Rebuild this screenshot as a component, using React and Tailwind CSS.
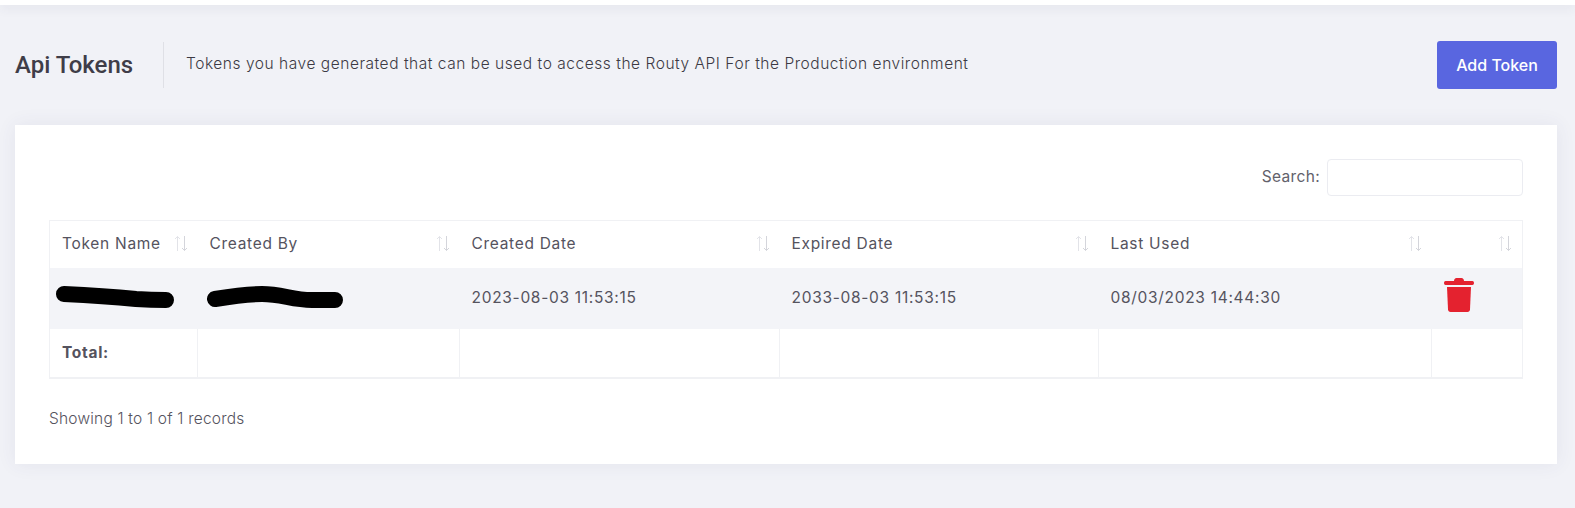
const SANS = "font-['Inter','Open_Sans',sans-serif]"

function SortIcon() {
  return (
    <svg width="16" height="17" viewBox="0 0 16 17" fill="none" stroke="#e2e3e8" strokeWidth="1" className="shrink-0">
      <path d="M4.500 16V1.500M2 4l2.500-2.500L7 4" />
      <path d="M11.500 1v14.500M9 13l2.500 2.500L14 13" stroke="#d4d5db" />
    </svg>
  )
}

function TrashIcon() {
  return (
    <svg width="30" height="34" viewBox="0 0 30 34" className="block">
      <path d="M10 3c0-1.600 1-3 2.500-3h5C19 0 20 1.400 20 3h8.500c.8 0 1.500.9 1.500 2s-.7 2-1.500 2h-27C.7 7 0 6.100 0 5s.7-2 1.500-2z" fill="#e4222f" />
      <path d="M3 9h24l-1 22.500c-.1 1.500-1 2.500-2.500 2.500h-17C5 34 4.100 33 4 31.500z" fill="#e4222f" />
    </svg>
  )
}

function Scribble({ d, width }) {
  return (
    <svg width={width} height="24" viewBox={`0 0 ${width} 24`} fill="none" className="block">
      <path d={d} stroke="#000" strokeWidth="16" strokeLinecap="round" strokeLinejoin="round" />
    </svg>
  )
}

const headers = [
  { label: "Token Name", width: "w-[148px]" },
  { label: "Created By", width: "w-[262px]" },
  { label: "Created Date", width: "w-[320px]" },
  { label: "Expired Date", width: "w-[319px]" },
  { label: "Last Used", width: "w-[333px]" },
  { label: "", width: "w-[91px]" },
]

export default function App() {
  return (
    <div className={`h-[508px] overflow-hidden bg-[#f1f2f7] ${SANS}`}>
      <div className="h-[5px] bg-white shadow-[0_2px_12px_rgba(60,60,90,0.12)]" />

      <div className="flex h-[120px] items-center pl-[15px] pr-[18px]">
        <h1 className="w-[148px] font-['Roboto',sans-serif] text-[24px] font-medium text-[#3f3d48]">Api Tokens</h1>
        <div className="h-[46px] w-px bg-[#dfe0e6]" />
        <p className="ml-[22px] flex-1 pb-[3px] text-[15.500px] font-light tracking-[0.54px] text-[#3c3a44]">
          Tokens you have generated that can be used to access the Routy API For the Production environment
        </p>
        <button className="h-[48px] w-[120px] rounded-[3px] bg-[#5966e0] text-[16px] font-medium text-white">Add Token</button>
      </div>

      <div className="ml-[15px] mr-[18px] h-[339px] bg-white px-[34px] pt-[34px] shadow-[0_0_18px_rgba(60,60,110,0.08)]">
        <div className="flex items-center justify-end gap-[7px]">
          <label className="pb-[2px] text-[15.500px] tracking-[0.35px] text-[#62616b]">Search:</label>
          <input className="h-[37px] w-[196px] rounded-[4px] border border-[#ebecf1] bg-white" />
        </div>

        <table className="mt-[24px] w-[1473px] table-fixed border-collapse border border-[#f0f1f4] text-[15.500px] tracking-[0.7px] text-[#55535e]">
          <thead>
            <tr className="h-[47px]">
              {headers.map((h, i) => (
                <th key={i} className={`${h.width} pb-[2px] pl-[12px] pr-[9px] text-left font-normal`}>
                  <div className="flex items-center justify-between">
                    <span>{h.label}</span>
                    <SortIcon />
                  </div>
                </th>
              ))}
            </tr>
          </thead>
          <tbody>
            <tr className="h-[61px] bg-[#f3f4f8]">
              <td className="pl-[6px] pb-[2px]">
                <Scribble width="120" d="M8 9C30 10 60 12 80 14 95 15 105 15 110 15" />
              </td>
              <td className="pl-[9px] pb-[2px]">
                <Scribble width="140" d="M8 14C20 12 40 9 55 9 75 9 85 15 105 15 115 15 122 15 128 15" />
              </td>
              <td className="px-[12px]">2023-08-03 11:53:15</td>
              <td className="px-[12px]">2033-08-03 11:53:15</td>
              <td className="px-[12px]">08/03/2023 14:44:30</td>
              <td className="pl-[12px] pb-[6px]"><TrashIcon /></td>
            </tr>
          </tbody>
          <tfoot>
            <tr className="h-[49px] border-b-2 border-[#f0f1f4]">
              <td className="border-r border-[#f0f1f4] px-[12px] font-bold">Total:</td>
              <td className="border-r border-[#f0f1f4]" />
              <td className="border-r border-[#f0f1f4]" />
              <td className="border-r border-[#f0f1f4]" />
              <td className="border-r border-[#f0f1f4]" />
              <td />
            </tr>
          </tfoot>
        </table>

        <p className="mt-[28px] text-[15.500px] font-light tracking-[0.2px] text-[#55535e]">Showing 1 to 1 of 1 records</p>
      </div>
    </div>
  )
}
